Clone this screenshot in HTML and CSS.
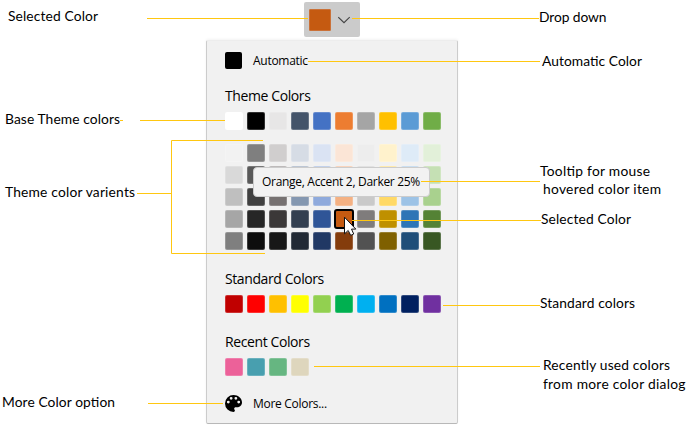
FILE: index.html
```
<!DOCTYPE html>
<html lang="en">
<head>
<meta charset="utf-8">
<title>Color picker palette</title>
<link rel="stylesheet" href="styles.css">
</head>
<body>
<main class="stage">
  <div class="picker">
    <button class="dropdown" aria-label="Selected color">
      <span class="current"></span>
      <svg class="chevron" width="14" height="8" viewBox="0 0 14 8"><path d="M.3 1.200 6 6.700 11.700 1.200"/></svg>
    </button>
    <section class="panel">
      <div class="row automatic"><span class="auto-swatch"></span><span class="item-text auto-text">Automatic</span></div>
      <h2 class="theme-title">Theme Colors</h2>
      <div class="swatches" data-colors="ffffff 000000 e7e6e6 44546a 4472c4 ed7d31 a5a5a5 ffc000 5b9bd5 70ad47"></div>
      <div class="swatches variants" data-colors="f2f2f2 7f7f7f d0cece d6dce5 dae3f3 fbe5d6 ededed fff2cc deebf7 e2f0d9 d9d9d9 595959 aeabab adb9ca b4c7e7 f8cbad dbdbdb ffe699 bdd7ee c5e0b4 bfbfbf 404040 767171 8497b0 8faadc f4b183 c9c9c9 ffd966 9dc3e6 a9d18e a6a6a6 262626 3b3838 333f50 2f5597 c55a11 7f7c7c bf9000 2e75b6 548235 7f7f7f 0d0d0d 171717 222a35 203864 843c0c 525252 7f6000 1f4e79 385723"></div>
      <h2 class="standard-title">Standard Colors</h2>
      <div class="swatches" data-colors="c00000 ff0000 ffc000 ffff00 92d050 00b050 00b0f0 0070c0 002060 7030a0"></div>
      <h2 class="recent-title">Recent Colors</h2>
      <div class="swatches" data-colors="ec6199 489faf 66b681 ded6bd"></div>
      <div class="row more">
        <svg width="17" height="17" viewBox="3 3 18 18"><path d="M12 3a9 9 0 0 0 0 18c.83 0 1.5-.67 1.5-1.5 0-.39-.15-.74-.39-1.01-.23-.26-.38-.61-.38-.99 0-.83.67-1.5 1.5-1.5H16c2.76 0 5-2.24 5-5C21 6.58 16.97 3 12 3zM6.5 12a1.5 1.5 0 1 1 0-3 1.5 1.5 0 0 1 0 3zm3-4a1.5 1.5 0 1 1 0-3 1.5 1.5 0 0 1 0 3zm5 0a1.5 1.5 0 1 1 0-3 1.5 1.5 0 0 1 0 3zm3 4a1.5 1.5 0 1 1 0-3 1.5 1.5 0 0 1 0 3z"/></svg>
        <span class="item-text more-text">More Colors...</span>
      </div>
    </section>
  </div>
  <div class="tooltip"><span>Orange, Accent 2, Darker 25%</span></div>
  <svg class="callouts" width="689" height="428" viewBox="0 0 689 428">
    <path class="leader" d="M147 18.5H308M352 18.5H539M308 61.5H540M120 120.5H123M140 120.5H225M263 140.5H171.500V253.500H265M137 193.500H171M421 181.500H540M352 220.500H541M443 305.500H540M314 366.500H540M148 403.500H223"/>
    <g class="notes">
      <text x="8" y="21" textLength="90">Selected Color</text>
      <text x="539" y="22" textLength="67.500">Drop down</text>
      <text x="542" y="66" textLength="100">Automatic Color</text>
      <text x="5" y="124" textLength="115">Base Theme colors</text>
      <text x="5" y="197" textLength="130">Theme color varients</text>
      <text x="540" y="176" textLength="110">Tooltip for mouse</text>
      <text x="543" y="194" textLength="118">hovered color item</text>
      <text x="541" y="224" textLength="90">Selected Color</text>
      <text x="540" y="308" textLength="95">Standard colors</text>
      <text x="543" y="370" textLength="127">Recently used colors</text>
      <text x="543" y="389" textLength="142.500">from more color dialog</text>
      <text x="2" y="407" textLength="113">More Color option</text>
    </g>
    <path class="cursor" d="M344.500 217.200V233.800L348.200 230.500 350.700 235.400 353.700 234 351.500 229.100H355.800Z"/>
  </svg>
</main>
<script src="palette.js"></script>
</body>
</html>
```
FILE: styles.css
```
* { box-sizing: border-box; }
body { margin: 0; background: #fff; overflow: hidden; }
.stage { position: relative; width: 689px; height: 428px; font-family: "Open Sans", "Noto Sans", sans-serif; color: #000; }
.picker { width: 252px; margin-left: 206px; padding-top: 2px; }
.dropdown { display: flex; align-items: center; gap: 7px; width: 56px; height: 35px; margin: 0 0 3px 98px; padding: 0 0 0 5px; border: 0; border-radius: 2px; background: #cbcbcb; }
.current { width: 22px; height: 22px; border: 1px solid #ca7138; border-radius: 1px; background: #c55a11; }
.chevron { fill: none; stroke: #444; stroke-width: 1.1; }
.panel { height: 384px; padding: 11px 0 0 18px; border: 1px solid #ccc; border-top-color: #ededed; border-bottom-color: #b8b8b8; border-radius: 2px; background: #f1f1f1; box-shadow: 0 -1px 3px #0000000d; }
.row { display: flex; align-items: center; gap: 11px; height: 17px; }
.auto-swatch { width: 17px; height: 17px; border-radius: 2px; background: #000; }
.item-text { font-size: 12px; line-height: 17px; white-space: nowrap; }
.auto-text { letter-spacing: -.28px; }
.more-text { letter-spacing: -.29px; }
h2 { height: 20px; margin: 0; font-size: 14px; font-weight: 400; line-height: 20px; white-space: nowrap; letter-spacing: -.4px; }
.theme-title { margin-top: 17px; margin-bottom: 6px; }
.standard-title { margin-top: 19px; margin-bottom: 6px; }
.recent-title { margin-top: 19px; margin-bottom: 6px; }
.swatches { display: grid; grid-template-columns: repeat(10, 18px); gap: 4px; }
.swatch { width: 18px; height: 18px; border: 1px solid #ffffff30; border-radius: 2px; }
.variants { margin-top: 14px; }
.selected { outline: 2px solid #000; outline-offset: -1px; }
.more { margin-top: 19px; gap: 11px; }
.tooltip { position: absolute; left: 253px; top: 167px; width: 177px; height: 30px; padding-left: 8px; border: 1px solid #ccc; border-radius: 4px; background: #f2f2f2; font-size: 12px; line-height: 28px; white-space: nowrap; letter-spacing: -.3px; }
.callouts { position: absolute; left: 0; top: 0; }
.leader { fill: none; stroke: #ffc711; stroke-width: 1; }
.notes { font-family: Lato, sans-serif; font-size: 13.800px; fill: #000; }
.cursor { fill: #fff; stroke: #111; stroke-width: 1; }
```
FILE: palette.js
```
document.querySelectorAll('.swatches').forEach(function (grid) {
  grid.dataset.colors.split(' ').forEach(function (color) {
    var cell = document.createElement('span');
    cell.className = 'swatch' + (color === 'c55a11' ? ' selected' : '');
    cell.style.backgroundColor = '#' + color;
    grid.appendChild(cell);
  });
});
```
